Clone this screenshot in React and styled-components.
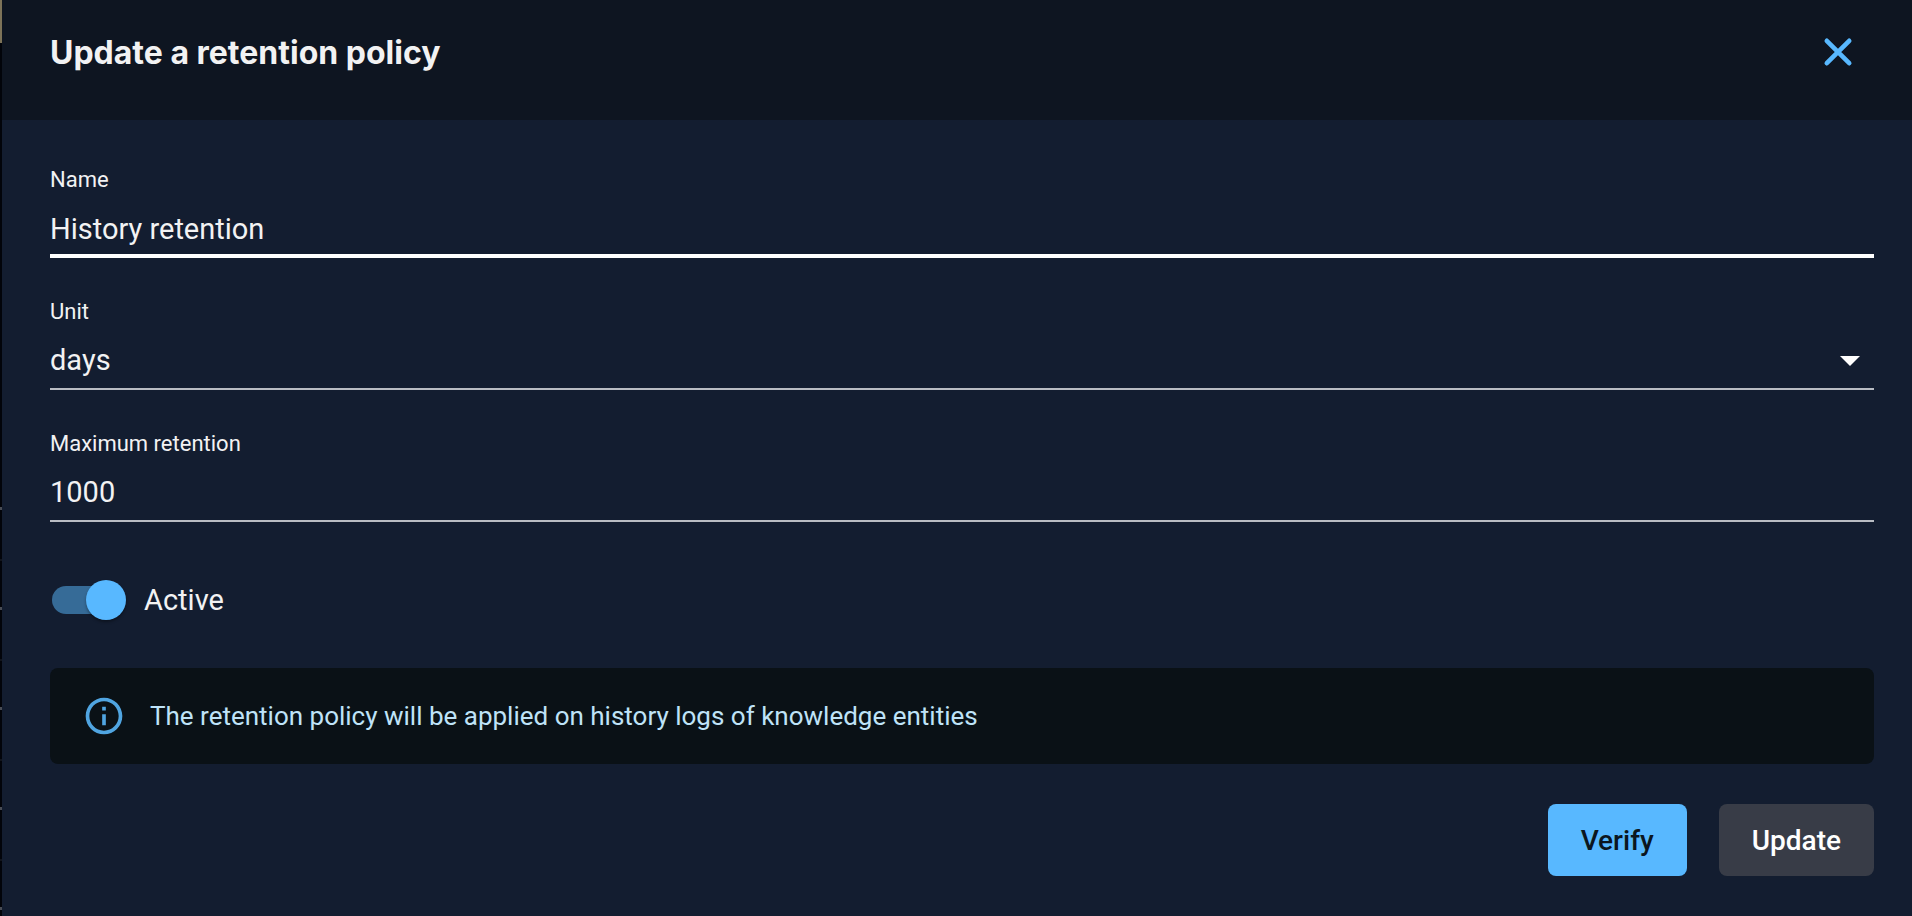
import React, { useState } from 'react';
import styled, { createGlobalStyle } from 'styled-components';

const GlobalStyle = createGlobalStyle`
  * {
    box-sizing: border-box;
  }

  body {
    margin: 0;
    background-color: #131d30;
    color: #f2f2f3;
    font-family: Roboto, sans-serif;
  }
`;

const Page = styled.div`
  display: grid;
  grid-template-columns: 2px 1fr;
  min-height: 100vh;
`;

// sliver of the dimmed list page left of the drawer
const Behind = styled.div`
  background:
    linear-gradient(#7d7358, #7d7358) 0 0 / 2px 43px no-repeat,
    linear-gradient(#02040a, #02040a) 0 0 / 2px 500px no-repeat,
    repeating-linear-gradient(#02040a 0 7px, #4a4d55 7px 10px, #02040a 10px 59px, #12151c 59px 61px, #02040a 61px 100px);
`;

const Drawer = styled.section`
  min-width: 0;
  background-color: #131d30;
`;

const Header = styled.header`
  display: flex;
  justify-content: space-between;
  align-items: flex-start;
  height: 120px;
  padding: 28px 50px 0 48px;
  background-color: #0e1521;
`;

const Title = styled.h1`
  margin: 0;
  font-family: Inter, sans-serif;
  font-size: 32px;
  font-weight: 700;
  line-height: 50px;
`;

const CloseButton = styled.button`
  display: flex;
  padding: 0;
  border: 0;
  background: none;
  color: #58b8ff;
  cursor: pointer;
`;

const Icon = styled.svg`
  flex-shrink: 0;
  width: ${({ $size }) => $size}px;
  height: ${({ $size }) => $size}px;
  fill: currentColor;
`;

const Form = styled.form`
  display: flex;
  flex-direction: column;
  gap: 40px;
  padding: 46px 38px 40px 48px;
`;

const Field = styled.div`
  display: grid;
  grid-template-rows: 28px 64px;

  label {
    font-size: 22px;
    line-height: 28px;
  }
`;

const control = `
  width: 100%;
  height: 64px;
  padding: 6px 0 0;
  border: 0;
  border-bottom: 2px solid #b9bcc3;
  border-radius: 0;
  outline: 0;
  background: none;
  color: inherit;
  font-family: inherit;
  font-size: 29px;
`;

const Input = styled.input`
  ${control}
  ${({ $active }) => $active && `
    padding-top: 10px;
    border-bottom: 4px solid #fff;
  `}
`;

const SelectBox = styled.div`
  display: grid;
  align-items: center;
  justify-items: end;

  > * {
    grid-area: 1 / 1;
  }

  svg {
    margin-top: 4px;
    color: #fff;
    pointer-events: none;
  }
`;

const Select = styled.select`
  ${control}
  appearance: none;

  option {
    background-color: #131d30;
  }
`;

const SwitchLabel = styled.label`
  display: flex;
  align-items: center;
  gap: 18px;
  height: 56px;
  margin-top: 10px;
  padding-left: 2px;
  font-size: 29px;
`;

const Switch = styled.input`
  appearance: none;
  display: grid;
  align-items: center;
  width: 74px;
  height: 40px;
  margin: 0;
  cursor: pointer;

  &::before,
  &::after {
    content: '';
    grid-area: 1 / 1;
  }

  &::before {
    width: 68px;
    height: 28px;
    border-radius: 14px;
    background-color: #4a5262;
  }

  &::after {
    width: 40px;
    height: 40px;
    border-radius: 50%;
    background-color: #d5d8de;
    box-shadow: 0 2px 3px rgba(0, 0, 0, 0.35);
  }

  &:checked::before {
    background-color: #366b97;
  }

  &:checked::after {
    justify-self: end;
    background-color: #58b8ff;
  }
`;

const Alert = styled.div`
  display: flex;
  align-items: center;
  gap: 24px;
  min-height: 96px;
  padding: 0 32px;
  border-radius: 8px;
  background-color: #0a1116;
  color: #bfe3f8;
  font-size: 26px;

  svg {
    color: #50a5e1;
  }
`;

const Actions = styled.div`
  display: flex;
  justify-content: flex-end;
  gap: 32px;
`;

const Button = styled.button`
  height: 72px;
  padding: 0 33px;
  border: 0;
  border-radius: 8px;
  background-color: ${({ $primary }) => ($primary ? '#58b8ff' : '#383c47')};
  color: ${({ $primary }) => ($primary ? '#0b1620' : '#fff')};
  font-family: inherit;
  font-size: 28px;
  font-weight: 500;
  cursor: pointer;
`;

const App = () => {
  const [name, setName] = useState('History retention');
  const [unit, setUnit] = useState('days');
  const [max, setMax] = useState('1000');
  const [active, setActive] = useState(true);

  return (
    <>
      <GlobalStyle />
      <Page>
        <Behind />
        <Drawer>
          <Header>
            <Title>Update a retention policy</Title>
            <CloseButton type="button" aria-label="Close">
              <Icon $size={48} viewBox="0 0 24 24">
                <path
                  d="M6.4 6.4 17.6 17.6M17.6 6.4 6.4 17.6"
                  stroke="currentColor"
                  strokeWidth="2.3"
                  strokeLinecap="round"
                />
              </Icon>
            </CloseButton>
          </Header>
          <Form onSubmit={(e) => e.preventDefault()}>
            <Field>
              <label htmlFor="name">Name</label>
              <Input id="name" $active value={name} onChange={(e) => setName(e.target.value)} />
            </Field>
            <Field>
              <label htmlFor="unit">Unit</label>
              <SelectBox>
                <Select id="unit" value={unit} onChange={(e) => setUnit(e.target.value)}>
                  <option value="minutes">minutes</option>
                  <option value="hours">hours</option>
                  <option value="days">days</option>
                </Select>
                <Icon $size={48} viewBox="0 0 24 24">
                  <path d="m7 10 5 5 5-5z" />
                </Icon>
              </SelectBox>
            </Field>
            <Field>
              <label htmlFor="max">Maximum retention</label>
              <Input id="max" inputMode="numeric" value={max} onChange={(e) => setMax(e.target.value)} />
            </Field>
            <SwitchLabel>
              <Switch type="checkbox" role="switch" checked={active} onChange={(e) => setActive(e.target.checked)} />
              Active
            </SwitchLabel>
            <Alert>
              <Icon $size={44} viewBox="0 0 24 24">
                <path d="M11 7h2v2h-2zm0 4h2v6h-2zm1-9C6.48 2 2 6.48 2 12s4.48 10 10 10 10-4.48 10-10S17.52 2 12 2m0 18c-4.41 0-8-3.59-8-8s3.59-8 8-8 8 3.59 8 8-3.59 8-8 8" />
              </Icon>
              <span>The retention policy will be applied on history logs of knowledge entities</span>
            </Alert>
            <Actions>
              <Button type="button" $primary>Verify</Button>
              <Button type="submit">Update</Button>
            </Actions>
          </Form>
        </Drawer>
      </Page>
    </>
  );
};

export default App;
